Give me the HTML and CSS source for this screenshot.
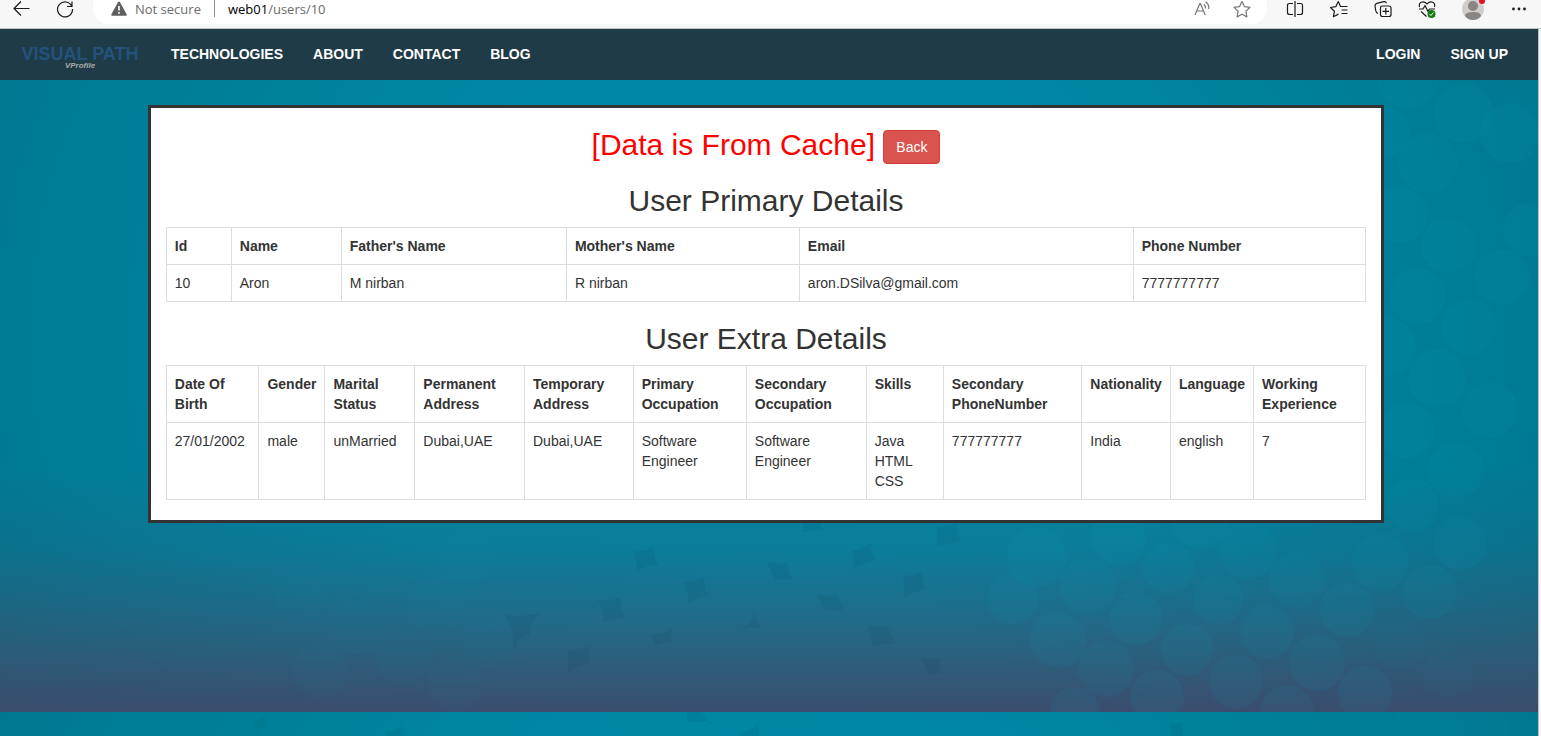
FILE: index.html
```html
<!DOCTYPE html>
<html lang="en">
<head>
<meta charset="utf-8">
<title>VProfile</title>
<link rel="stylesheet" href="styles.css">
</head>
<body>
<div class="toolbar">
  <button class="tool tool-back" aria-label="Back"><svg width="20" height="20" viewBox="0 0 20 20"><path class="ink" d="M17.500 8.500H2M9 1.500l-7 7 7 7"/></svg></button>
  <button class="tool" aria-label="Refresh"><svg width="20" height="20" viewBox="0 0 20 20"><path class="ink" d="M16.800 6.200A7.500 7.500 0 1 0 17.500 9M17 1.500v5h-5"/></svg></button>
  <div class="address">
    <button class="security"><svg width="16" height="18" viewBox="0 0 16 18"><path fill="#5f5f5f" d="M7 2.200q1-1.500 2 0l6.600 12q.6 1.500-.8 1.600H1.200Q-.2 15.700.4 14.200z"/><path stroke="#fff" stroke-width="1.600" d="M8 6v4.500M8 12v1.700"/></svg>Not secure</button>
    <span class="divider"></span>
    <span class="url">web01<span class="url-path">/users/10</span></span>
    <button class="pill-tool" aria-label="Read aloud"><svg width="20" height="20" viewBox="0 0 20 20"><path class="ink soft" d="M3 15L7.800 3.500h.600L13.200 15M4.900 11h6.400M11.800 4.200q2 1.500 1.600 4.300M13.500 1.800q4 2.700 3.200 7.200"/></svg></button>
    <button class="pill-tool" aria-label="Add to favorites"><svg width="20" height="20" viewBox="0 0 20 20"><path class="ink soft" d="M10 1.500l2.400 5.100 5.600.8-4.100 3.900 1 5.600-4.900-2.700-4.900 2.700 1-5.600L2 7.400l5.600-.8z"/></svg></button>
  </div>
  <button class="tool" aria-label="Split screen"><svg width="20" height="20" viewBox="0 0 20 20"><path class="ink" d="M8 3.500H4.500q-2 0-2 2v7q0 2 2 2H8M12 3.500h3.500q2 0 2 2v7q0 2-2 2H12M10 1v16"/></svg></button>
  <button class="tool" aria-label="Favorites"><svg width="20" height="20" viewBox="0 0 20 20"><path class="ink" d="M11.500 6.500L9.300 1.500 6.800 6.700l-5.300.8 3.900 3.800-1 5.400 5.100-2.600M11 6.500h7.500M12.500 10h6M12.500 13.500h6"/></svg></button>
  <button class="tool" aria-label="Collections"><svg width="20" height="20" viewBox="0 0 20 20"><path class="ink" d="M5 13.500Q3 12.500 2.700 10.500L2 6q-.2-2 1.800-2.600l7-1.700q2-.4 2.700 1.500M9.500 6h6.500q2 0 2 2v6.500q0 2-2 2H9.500q-2 0-2-2V8q0-2 2-2M12.800 8v6.500M9.500 11.300h6.500"/></svg></button>
  <button class="tool" aria-label="Browser essentials"><svg width="20" height="20" viewBox="0 0 20 20"><path class="ink" d="M2.500 7Q1.500 3 5 2q3-.5 5 2 2-2.500 5-2 3.500 1 2.500 5M2 9h4l2-3.500 3 6L12.500 9H18M4 11.500l5.500 5"/><circle cx="14.500" cy="14" r="4" fill="#107c10"/><path fill="none" stroke="#fff" d="M12.500 14l1.500 1.500 2.500-3"/></svg></button>
  <button class="tool tool-avatar" aria-label="Profile"><svg width="30" height="20" viewBox="0 0 30 20"><circle cx="15" cy="9" r="11" fill="#d0cdca"/><circle cx="15" cy="6" r="5" fill="#888583"/><path fill="#888583" d="M7 16q0-4 8-4t8 4q-3 4-8 4t-8-4"/><circle cx="24" cy="1" r="3" fill="#e81123"/></svg></button>
  <button class="tool" aria-label="Settings and more"><svg width="20" height="20" viewBox="0 0 20 20"><g fill="#1b1b1b"><circle cx="4.500" cy="9" r="1.400"/><circle cx="10" cy="9" r="1.400"/><circle cx="15.500" cy="9" r="1.400"/></g></svg></button>
</div>
<div class="viewport">
  <svg class="bokeh" viewBox="0 29 1538 707" preserveAspectRatio="xMidYMin slice" aria-hidden="true">
    <g class="discs">
      <circle cx="1408" cy="80" r="30"/><circle cx="1385" cy="132" r="25"/><circle cx="1428" cy="163" r="30"/><circle cx="1400" cy="215" r="28"/><circle cx="1449" cy="245" r="28"/><circle cx="1502" cy="277" r="28"/><circle cx="1418" cy="296" r="28"/><circle cx="1469" cy="327" r="28"/><circle cx="1437" cy="378" r="29"/><circle cx="1387" cy="347" r="29"/><circle cx="1530" cy="230" r="27"/><circle cx="1463" cy="113" r="30"/><circle cx="1510" cy="133" r="30"/><circle cx="1490" cy="410" r="28"/><circle cx="1407" cy="430" r="28"/><circle cx="1456" cy="470" r="28"/><circle cx="1412" cy="505" r="27"/>
      <circle cx="1037" cy="557" r="30"/><circle cx="1118" cy="537" r="28"/><circle cx="1088" cy="587" r="29"/><circle cx="1168" cy="568" r="26"/><circle cx="1200" cy="517" r="31"/><circle cx="1248" cy="550" r="29"/><circle cx="1218" cy="599" r="25"/><circle cx="1136" cy="618" r="27"/><circle cx="1187" cy="650" r="26"/><circle cx="1106" cy="669" r="28"/><circle cx="1267" cy="632" r="27"/><circle cx="1236" cy="682" r="27"/><circle cx="1297" cy="580" r="28"/><circle cx="1317" cy="663" r="28"/><circle cx="1347" cy="610" r="27"/><circle cx="1380" cy="562" r="29"/><circle cx="1430" cy="592" r="27"/><circle cx="1460" cy="543" r="27"/><circle cx="1013" cy="598" r="26"/><circle cx="1058" cy="640" r="28"/>
      <path d="M1338 693a27 27 0 0 1 54 0q0 12-8 19h-38q-8-7-8-19M1260 712a27 27 0 0 1 54 0zM1050 712a25 25 0 0 1 50 0zM1130 697a27 27 0 0 1 54 0q0 9-5 15h-44q-5-6-5-15"/>
    </g>
    <g class="discs faint">
      <circle cx="302" cy="597" r="27"/><circle cx="353" cy="627" r="28"/><circle cx="437" cy="603" r="30"/><circle cx="467" cy="557" r="28"/><circle cx="487" cy="640" r="28"/><circle cx="455" cy="684" r="28"/><circle cx="403" cy="657" r="28"/><circle cx="320" cy="670" r="28"/><circle cx="1400" cy="643" r="27"/><circle cx="1448" cy="673" r="25"/>
      <path d="M610 712h200q8 12 5 24H627q-10-10-17-24M1053 712h57q-28 28-57 0M1395 712h110l5 24H1402z"/>
    </g>
    <g class="gaps">
      <path d="M634 551q10 2 20-5-1 11 4 19-10-1-22 6 2-10-2-20M684 582q12 0 20-5 0 12 4 19-10 1-20 7 1-12-4-21M766 562q13 3 21 0 0 10 5 17-10 0-18 0-3-10-8-17M851 551q10-1 20-8 0 10 4 17-10 4-22 8 2-10-2-17M903 577q10-1 19-5 0 10 3 17-10 3-21 8 1-12-1-20M816 594q12 3 22 0 2 10 6 18-10-2-20-2-3-9-8-16M867 625q13 3 20 0 3 10 8 18-12 0-22 5-1-13-6-23M741 630q8-5 14-18 2 10 6 17-10-3-20 1M651 635q12 0 21-8-1 9-1 14-10 1-18 5 1-6-2-11M598 600q14 2 22-3 0 12 5 20-10 3-22 5 1-12-5-22M568 651q12-1 21-5-1 12 0 17-10 4-22 10 2-12 1-22M920 658q11 2 20 0-2 10 1 16-8-2-12 0-4-9-9-16M803 523h18q-1 5 4 7-12-1-22 3zM937 526q12 2 20-4-1 12 4 19-12 2-24 5zM504 614q16 6 38-3-12 10-12 25-8-4-16 13 0-20-10-35M687 712h15q3 7 12 12-14-4-27-2zM742 733q12-4 17-10v13h-20zM385 732q12-1 18-6l2 10h-19zM254 722q6-3 11-6-2 8 1 10l-11 4zM1170 722q6 4 13 0-2 10 1 14h-12z"/>
    </g>
  </svg>
  <nav class="navbar">
    <a class="brand" href="#"><span class="brand-name">VISUAL PATH</span><span class="brand-sub">VProfile</span></a>
    <ul class="menu">
      <li><a href="#">TECHNOLOGIES</a></li>
      <li><a href="#">ABOUT</a></li>
      <li><a href="#">CONTACT</a></li>
      <li><a href="#">BLOG</a></li>
    </ul>
    <ul class="menu menu-right">
      <li><a href="#">LOGIN</a></li>
      <li><a href="#">SIGN UP</a></li>
    </ul>
  </nav>
  <main class="panel">
    <h2><span class="notice">[Data is From Cache]</span> <button class="btn-danger">Back</button></h2>
    <h2>User Primary Details</h2>
    <table class="details">
      <thead><tr><th>Id</th><th>Name</th><th>Father's Name</th><th>Mother's Name</th><th>Email</th><th>Phone Number</th></tr></thead>
      <tbody><tr><td>10</td><td>Aron</td><td>M nirban</td><td>R nirban</td><td>aron.DSilva@gmail.com</td><td>7777777777</td></tr></tbody>
    </table>
    <h2>User Extra Details</h2>
    <table class="details">
      <thead><tr><th>Date Of Birth</th><th>Gender</th><th>Marital Status</th><th>Permanent Address</th><th>Temporary Address</th><th>Primary Occupation</th><th>Secondary Occupation</th><th>Skills</th><th>Secondary PhoneNumber</th><th>Nationality</th><th>Language</th><th>Working Experience</th></tr></thead>
      <tbody><tr><td>27/01/2002</td><td>male</td><td>unMarried</td><td>Dubai,UAE</td><td>Dubai,UAE</td><td>Software Engineer</td><td>Software Engineer</td><td>Java HTML CSS</td><td>777777777</td><td>India</td><td>english</td><td>7</td></tr></tbody>
    </table>
  </main>
</div>
</body>
</html>
```

FILE: styles.css
```css
* { box-sizing: border-box; }

body {
  margin: 0;
  min-height: 100vh;
  display: flex;
  flex-direction: column;
  background: #f7f7f7;
  color: #333;
  font: 14px/20px "Liberation Sans", Arial, sans-serif;
}

button {
  margin: 0;
  padding: 0;
  border: 0;
  background: none;
  font: inherit;
  color: inherit;
}

svg { display: block; }

/* Browser toolbar */
.toolbar {
  display: flex;
  align-items: flex-start;
  padding-bottom: 4px;
  border-bottom: 1px solid #bfbfbf;
  overflow: hidden;
  font: 13px/18px "Open Sans", "Noto Sans", sans-serif;
}

.tool {
  flex: none;
  width: 44px;
  display: flex;
  justify-content: center;
}

.tool-back { width: 43px; }
.tool-avatar { width: 48px; }

.ink {
  fill: none;
  stroke: #1b1b1b;
  stroke-width: 1.2;
  stroke-linejoin: round;
}

.soft { stroke: #767676; }

.address {
  flex: 1;
  height: 24px;
  margin: 0 6px;
  padding: 0 5px 0 18px;
  display: flex;
  align-items: flex-start;
  background: #fff;
  border-radius: 0 0 16px 16px;
}

.security {
  display: flex;
  gap: 8px;
  color: #6b6b6b;
}

.divider {
  width: 1px;
  height: 17px;
  margin: 0 13px;
  background: #8a8a8a;
}

.url {
  flex: 1;
  color: #000;
}

.url-path { color: #6b6b6b; }

.pill-tool {
  width: 40px;
  display: flex;
  justify-content: center;
}

/* Page */
.viewport {
  flex: 1;
  position: relative;
  margin-right: 2px;
  border-right: 1px solid #bfbfbf;
  background:
    linear-gradient(rgba(72, 74, 106, 0) 64%, rgba(72, 74, 106, .16) 76%, rgba(70, 74, 106, .5) 88%, rgba(66, 72, 104, .9) 100%),
    radial-gradient(ellipse 60% 120% at 50% 45%, #0089a6, #0086a2 45%, #00758e);
  background-size: 100% 683px;
}

.bokeh {
  position: absolute;
  inset: 0;
  width: 100%;
  height: 100%;
}

.discs { fill: #10a0c0; fill-opacity: .08; }
.faint { fill-opacity: .03; }
.gaps { fill: #003848; fill-opacity: .08; }

.navbar {
  position: relative;
  display: flex;
  height: 51px;
  background: #1f3b47;
}

.brand {
  flex: none;
  width: 156px;
  padding: 16px 0 0 4px;
  display: flex;
  flex-direction: column;
  align-items: center;
  text-decoration: none;
  font-weight: bold;
}

.brand-name {
  font-size: 18px;
  line-height: 18px;
  color: #23527c;
}

.brand-sub {
  font-size: 8px;
  line-height: 6px;
  font-style: italic;
  color: #aaa;
}

.menu {
  display: flex;
  margin: 0;
  padding: 0;
  list-style: none;
}

.menu-right {
  margin-left: auto;
  padding-right: 15px;
}

.menu a {
  display: block;
  padding: 15px;
  color: #fff;
  font-weight: bold;
  text-decoration: none;
}

.panel {
  position: relative;
  width: calc(80% + 6px);
  margin: 25px 0 0 calc(10% - 6px);
  padding: 0 15px;
  border: 3px solid #333;
  background: #fff;
  display: flow-root;
}

h2 {
  margin: 20px 0 10px;
  font-size: 30px;
  font-weight: normal;
  line-height: 33px;
  text-align: center;
}

.notice { color: #f00; }

.btn-danger {
  padding: 6px 12px;
  border: 1px solid #d43f3a;
  border-radius: 4px;
  background: #d9534f;
  color: #fff;
  font-size: 14px;
  line-height: 20px;
  vertical-align: middle;
}

.details {
  width: 100%;
  margin-bottom: 20px;
  border: 1px solid #ddd;
  border-collapse: collapse;
}

.details th,
.details td {
  padding: 8px;
  border: 1px solid #ddd;
  text-align: left;
  vertical-align: top;
}
```
